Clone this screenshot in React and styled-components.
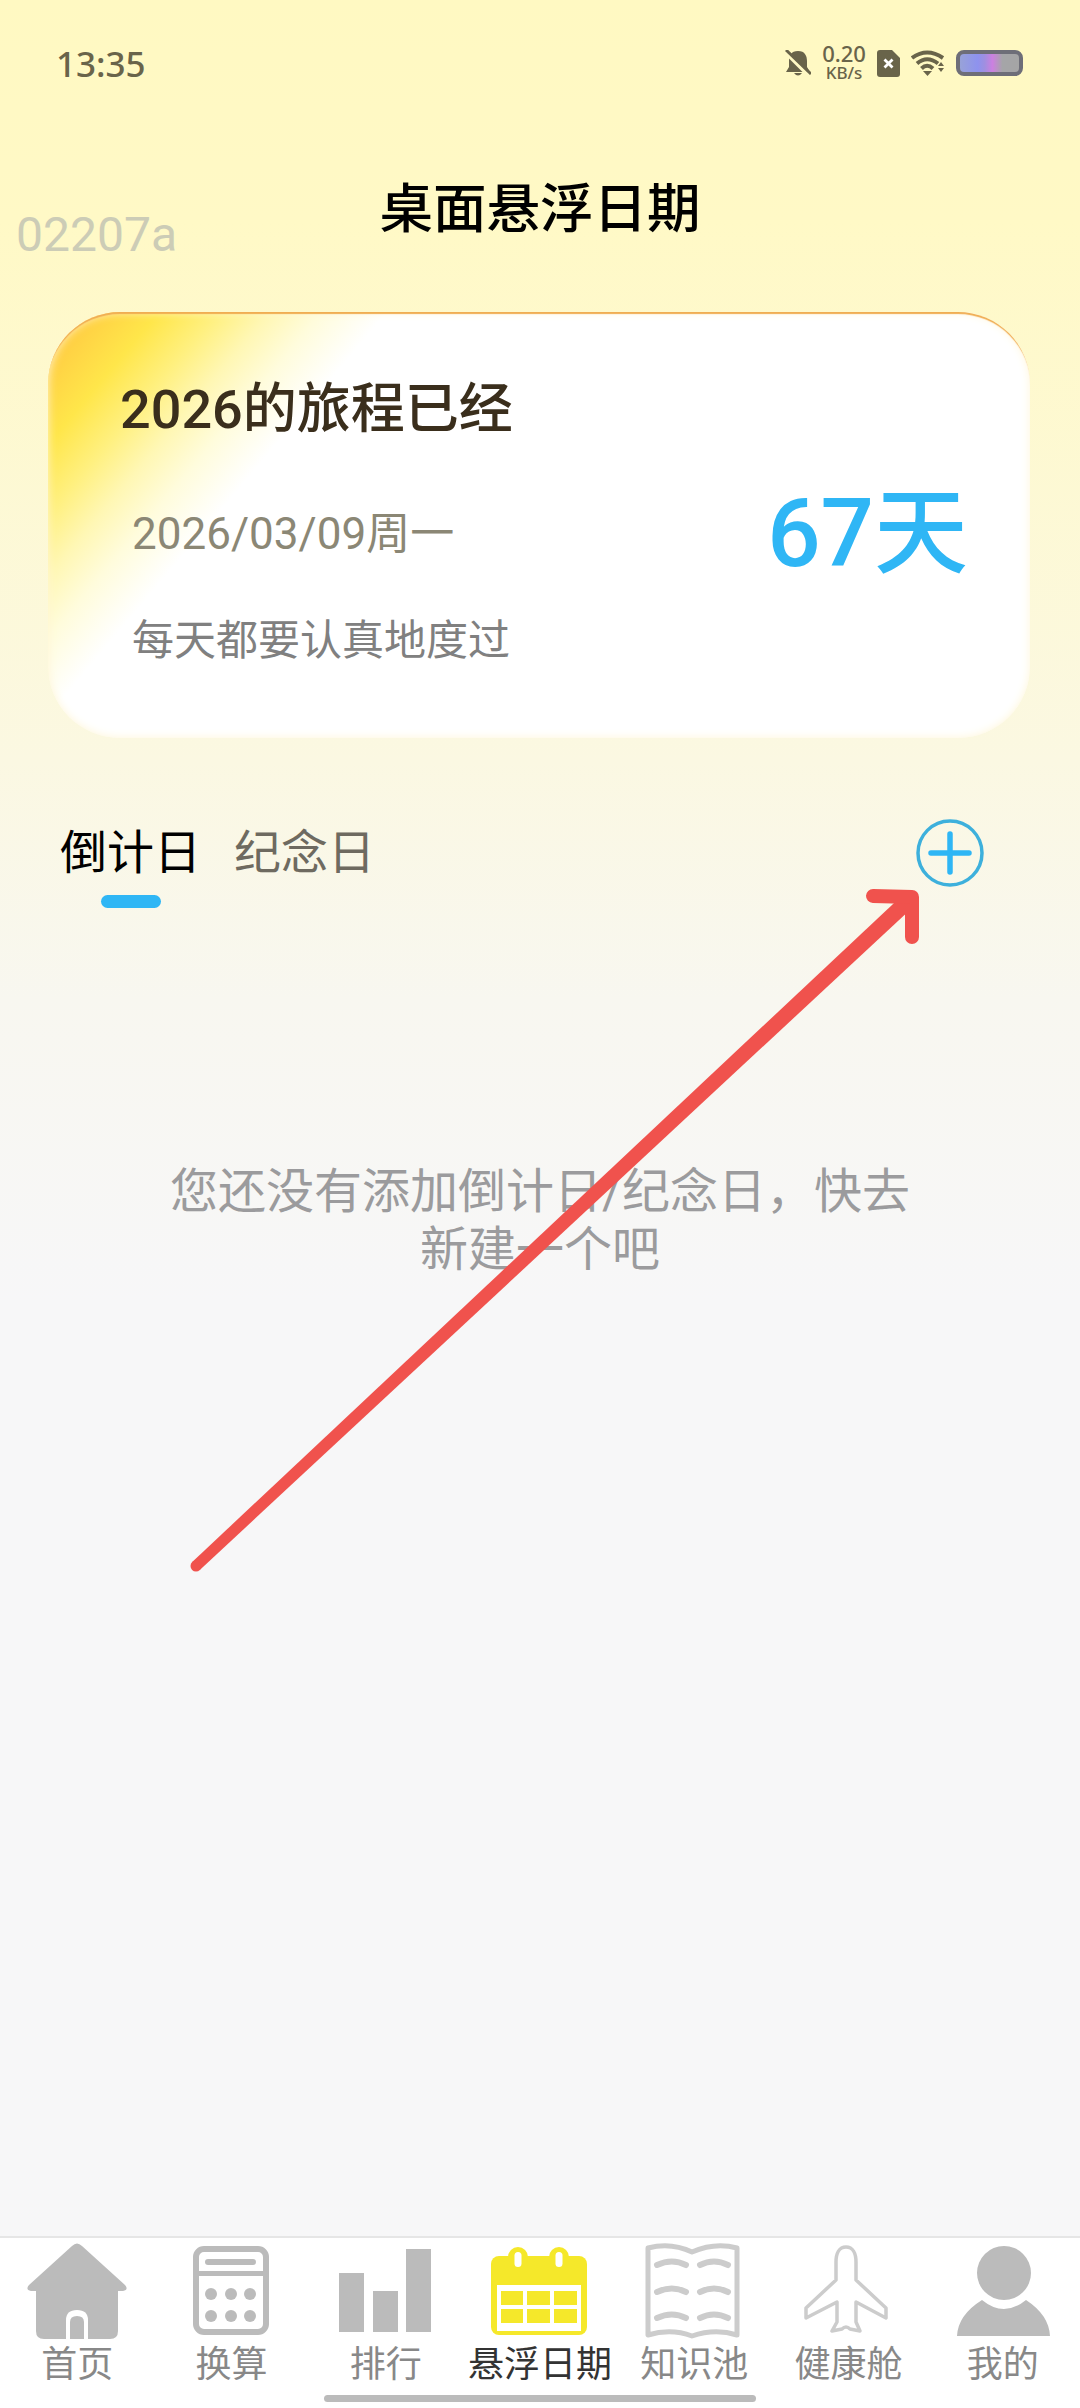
import React from "react";
import styled, { createGlobalStyle } from "styled-components";

const GlobalStyle = createGlobalStyle`
  html, body {
    margin: 0;
    padding: 0;
  }
  body {
    font-family: Roboto, "Noto Sans CJK SC", sans-serif;
  }
`;

const Page = styled.div`
  position: relative;
  width: 1080px;
  height: 2408px;
  display: flex;
  flex-direction: column;
  overflow: hidden;
  background: linear-gradient(180deg, #fff9c2 0, #fff9c6 220px, #fbf8e2 760px, #f8f7f0 1000px, #f7f7f8 1300px);
`;

const StatusBar = styled.div`
  height: 126px;
  flex: none;
  display: flex;
  align-items: center;
  justify-content: space-between;
  padding: 0 57px 0 56px;
`;

const Clock = styled.span`
  font-family: "Noto Sans", sans-serif;
  font-size: 35px;
  font-weight: 500;
  color: #69644a;
`;

const StatusIcons = styled.div`
  display: flex;
  align-items: center;
  gap: 11px;
`;

const Speed = styled.div`
  width: 44px;
  display: flex;
  flex-direction: column;
  align-items: center;
  font-family: "Noto Sans", sans-serif;
  font-weight: 500;
  color: #69644a;
`;

const SpeedValue = styled.span`
  font-size: 22px;
  line-height: 20px;
`;

const SpeedUnit = styled.span`
  font-size: 17px;
  line-height: 20px;
`;

const Battery = styled.div`
  width: 67px;
  height: 26px;
  box-sizing: border-box;
  border: 4px solid #6e6e78;
  border-radius: 8px;
  background: linear-gradient(90deg, #98a2d8 0, #8e92ee 30%, #a08fe0 42%, #cc80e0 55%, #a5a5a8 72%, #a5a5a5 100%);
`;

const Watermark = styled.span`
  position: absolute;
  left: 16px;
  top: 206px;
  font-size: 48px;
  line-height: 58px;
  color: #ccccb6;
`;

const Header = styled.header`
  height: 162px;
  flex: none;
  box-sizing: border-box;
  padding-bottom: 6px;
  display: flex;
  align-items: center;
  justify-content: center;
`;

const Title = styled.h1`
  margin: 0;
  font-size: 53.5px;
  font-weight: 500;
  color: #000;
`;

const Card = styled.section`
  flex: none;
  box-sizing: border-box;
  width: 982px;
  height: 426px;
  margin: 24px 0 0 48px;
  padding: 70px 62px 0 72px;
  border-radius: 72px;
  background: linear-gradient(130deg, #ffc03f 0, #ffe64a 85px, #fff07f 130px, #fff7b4 170px, #fffcdc 210px, #fff 260px);
  box-shadow: inset 0 3px 1px -1px #f0ad52, inset 0 0 10px #fff6d8;
`;

const CardTitle = styled.div`
  font-size: 54px;
  line-height: 56px;
  font-weight: 500;
  color: #3a2e1c;
`;

const CardMiddle = styled.div`
  display: flex;
  align-items: center;
  justify-content: space-between;
  margin-top: 51px;
  padding-left: 12px;
`;

const CardDate = styled.span`
  font-size: 44px;
  line-height: 90px;
  color: #8b8775;
`;

const DayCount = styled.span`
  font-size: 94px;
  line-height: 90px;
  font-weight: 500;
  color: #2fb6f5;
`;

const CardNote = styled.div`
  margin-top: 34px;
  padding-left: 12px;
  font-size: 42px;
  line-height: 56px;
  color: #808080;
`;

const TabRow = styled.div`
  flex: none;
  display: flex;
  align-items: flex-start;
  justify-content: space-between;
  margin-top: 81px;
  padding: 0 96px 0 60px;
`;

const Tabs = styled.div`
  display: flex;
  gap: 33px;
  margin-top: 4px;
`;

const Tab = styled.div`
  display: flex;
  flex-direction: column;
  align-items: center;
  gap: 12px;
  font-size: 47px;
  line-height: 60px;
  color: ${(p) => (p.$active ? "#000" : "#6e6a60")};
`;

const TabMark = styled.i`
  width: 60px;
  height: 13px;
  border-radius: 7px;
  background: ${(p) => (p.$active ? "#2fb6f5" : "transparent")};
`;

const EmptyText = styled.p`
  flex: 1;
  width: 760px;
  margin: 255px auto 0;
  font-size: 48px;
  line-height: 58px;
  text-align: center;
  color: #9b9b9d;
`;

const Nav = styled.nav`
  flex: none;
  height: 172px;
  box-sizing: border-box;
  border-top: 2px solid #e6e6e6;
  background: #fff;
`;

const NavGrid = styled.div`
  display: grid;
  grid-template-columns: repeat(7, 1fr);
  padding-top: 2px;
`;

const NavItem = styled.div`
  display: flex;
  flex-direction: column;
  align-items: center;
  font-size: 36px;
  line-height: 50px;
  white-space: nowrap;
  color: ${(p) => (p.$active ? "#333" : "#888")};
`;

const HomeBar = styled.div`
  width: 432px;
  height: 7px;
  margin: 5px auto 0;
  border-radius: 4px;
  background: #bbb;
`;

const ArrowLayer = styled.svg`
  position: absolute;
  left: 0;
  top: 0;
  pointer-events: none;
`;

const NavIcon = ({ children }) => (
  <svg width="110" height="100" viewBox="0 0 110 100">
    {children}
  </svg>
);

const GRAY = "#bbb";
const YELLOW = "#f5e82a";

const HomeIcon = () => (
  <NavIcon>
    <path
      d="M50 6 Q55 1 60 6 L103 45 Q107 50 101 51 L96 51 L96 91 Q96 99 88 99 L22 99 Q14 99 14 91 L14 51 L9 51 Q3 50 7 45 Z"
      fill={GRAY}
    />
    <path d="M44 99 L44 80 Q44 70 55 70 Q66 70 66 80 L66 99 Z" fill="#fff" />
    <path d="M48 99 L48 82 Q48 76 55 76 Q62 76 62 82 L62 99 Z" fill={GRAY} />
  </NavIcon>
);

const CalcIcon = () => (
  <NavIcon>
    <rect x="20" y="9" width="70" height="83" rx="8" fill="none" stroke={GRAY} strokeWidth="6" />
    <rect x="20" y="31" width="70" height="5" fill={GRAY} />
    <rect x="29" y="19" width="51" height="6" rx="3" fill={GRAY} />
    {[54, 76].map((y) =>
      [35, 55, 74].map((x) => <circle key={`${x}-${y}`} cx={x} cy={y} r="6" fill={GRAY} />)
    )}
  </NavIcon>
);

const RankIcon = () => (
  <NavIcon>
    <rect x="8" y="33" width="25" height="59" fill={GRAY} />
    <rect x="42" y="51" width="25" height="41" fill={GRAY} />
    <rect x="75" y="9" width="25" height="83" fill={GRAY} />
  </NavIcon>
);

const CalendarIcon = () => (
  <NavIcon>
    <rect x="6" y="16" width="96" height="79" rx="8" fill={YELLOW} />
    {[33, 74].map((x) => (
      <g key={x}>
        <circle cx={x} cy="17" r="10" fill={YELLOW} />
        <rect x={x - 3.5} y="12" width="7" height="15" rx="3.5" fill="#fff" />
      </g>
    ))}
    <rect x="12" y="45" width="84" height="46" fill="#fff" />
    {[51, 69].map((y) =>
      [
        [16, 22],
        [42, 23],
        [69, 23],
      ].map(([x, w]) => <rect key={`${x}-${y}`} x={x} y={y} width={w} height="14" fill={YELLOW} />)
    )}
  </NavIcon>
);

const BookIcon = () => (
  <NavIcon>
    <path
      d="M9 8 Q32 2 53 12 Q76 2 98 8 L98 95 Q76 88 53 96 Q32 88 9 95 Z"
      fill="none"
      stroke="#ccc"
      strokeWidth="5"
      strokeLinejoin="round"
    />
    {[25, 52, 78].map((y) => (
      <g key={y} fill="none" stroke="#ccc" strokeWidth="6" strokeLinecap="round">
        <path d={`M18 ${y} Q33 ${y - 7} 47 ${y}`} />
        <path d={`M61 ${y} Q75 ${y - 7} 89 ${y}`} />
      </g>
    ))}
  </NavIcon>
);

const PlaneIcon = () => (
  <NavIcon>
    <path
      d="M52 7 C45 7 42 14 42 22 L42 40 L12 68 L12 78 L43 62 L43 82 L38 91 L48 89 Q52 85 56 89 L66 91 L62 82 L62 62 L92 78 L92 68 L62 40 L62 22 C62 14 59 7 52 7 Z"
      fill="none"
      stroke="#ccc"
      strokeWidth="3.5"
      strokeLinejoin="round"
    />
  </NavIcon>
);

const PersonIcon = () => (
  <NavIcon>
    <circle cx="56" cy="33" r="27" fill={GRAY} />
    <path d="M9 96 Q10 75 34 60 Q56 78 78 60 Q101 75 102 96 Z" fill={GRAY} />
  </NavIcon>
);

const navItems = [
  { label: "首页", Icon: HomeIcon },
  { label: "换算", Icon: CalcIcon },
  { label: "排行", Icon: RankIcon },
  { label: "悬浮日期", Icon: CalendarIcon, active: true },
  { label: "知识池", Icon: BookIcon },
  { label: "健康舱", Icon: PlaneIcon },
  { label: "我的", Icon: PersonIcon },
];

const BellOff = () => (
  <svg width="26" height="26" viewBox="0 0 26 26">
    <path d="M13 1 C6 1 4 6 4 11 L4 17 L1 22 L25 22 L22 17 L22 11 C22 6 20 1 13 1 Z M9 23 Q13 28 17 23 Z" fill="#69644a" />
    <path d="M1 3 L24 26" stroke="#fff9c4" strokeWidth="3.5" />
    <path d="M1 0 L26 24" stroke="#69644a" strokeWidth="3" />
  </svg>
);

const SimIcon = () => (
  <svg width="23" height="27" viewBox="0 0 23 27">
    <path d="M3 0 L15 0 L23 8 L23 24 Q23 27 20 27 L3 27 Q0 27 0 24 L0 3 Q0 0 3 0 Z" fill="#69644a" />
    <path d="M7.5 9.5 L15.5 17.5 M15.5 9.5 L7.5 17.5" stroke="#fff" strokeWidth="2.8" />
  </svg>
);

const WifiIcon = () => (
  <svg width="34" height="26" viewBox="0 0 34 26">
    <g fill="none" stroke="#69644a" strokeWidth="4">
      <path d="M1 8 Q16 -3 32 8" />
      <path d="M6 13.5 Q16 5 27 13.5" />
      <path d="M10.5 18.5 Q16 13 22 18.5" />
    </g>
    <path d="M12 21 L21 21 L16.5 26 Z" fill="#69644a" />
    <path d="M27 16 L30 12 L33 16 Z M27 18 L33 18 L30 22 Z" fill="#69644a" />
  </svg>
);

export default function App() {
  return (
    <Page>
      <GlobalStyle />
      <StatusBar>
        <Clock>13:35</Clock>
        <StatusIcons>
          <BellOff />
          <Speed>
            <SpeedValue>0.20</SpeedValue>
            <SpeedUnit>KB/s</SpeedUnit>
          </Speed>
          <SimIcon />
          <WifiIcon />
          <Battery />
        </StatusIcons>
      </StatusBar>
      <Watermark>02207a</Watermark>
      <Header>
        <Title>桌面悬浮日期</Title>
      </Header>
      <Card>
        <CardTitle>2026的旅程已经</CardTitle>
        <CardMiddle>
          <CardDate>2026/03/09周一</CardDate>
          <DayCount>67天</DayCount>
        </CardMiddle>
        <CardNote>每天都要认真地度过</CardNote>
      </Card>
      <TabRow>
        <Tabs>
          <Tab $active>
            倒计日
            <TabMark $active />
          </Tab>
          <Tab>
            纪念日
            <TabMark />
          </Tab>
        </Tabs>
        <svg width="68" height="68" viewBox="0 0 68 68">
          <circle cx="34" cy="34" r="32" fill="none" stroke="#3db0dc" strokeWidth="3.5" />
          <path d="M15 34 L53 34 M34 15 L34 53" stroke="#2fb6f5" strokeWidth="5.5" strokeLinecap="round" />
        </svg>
      </TabRow>
      <EmptyText>您还没有添加倒计日/纪念日，快去新建一个吧</EmptyText>
      <Nav>
        <NavGrid>
          {navItems.map(({ label, Icon, active }) => (
            <NavItem key={label} $active={active}>
              <Icon />
              {label}
            </NavItem>
          ))}
        </NavGrid>
        <HomeBar />
      </Nav>
      <ArrowLayer width="1080" height="2408" viewBox="0 0 1080 2408">
        <polygon points="192.2,1562 199.8,1570 915.5,904.8 904.5,893.2" fill="#f0524d" />
        <circle cx="196" cy="1566" r="5.5" fill="#f0524d" />
        <path
          d="M873 896 L912 897 L912 937"
          fill="none"
          stroke="#f0524d"
          strokeWidth="14"
          strokeLinecap="round"
          strokeLinejoin="round"
        />
      </ArrowLayer>
    </Page>
  );
}
